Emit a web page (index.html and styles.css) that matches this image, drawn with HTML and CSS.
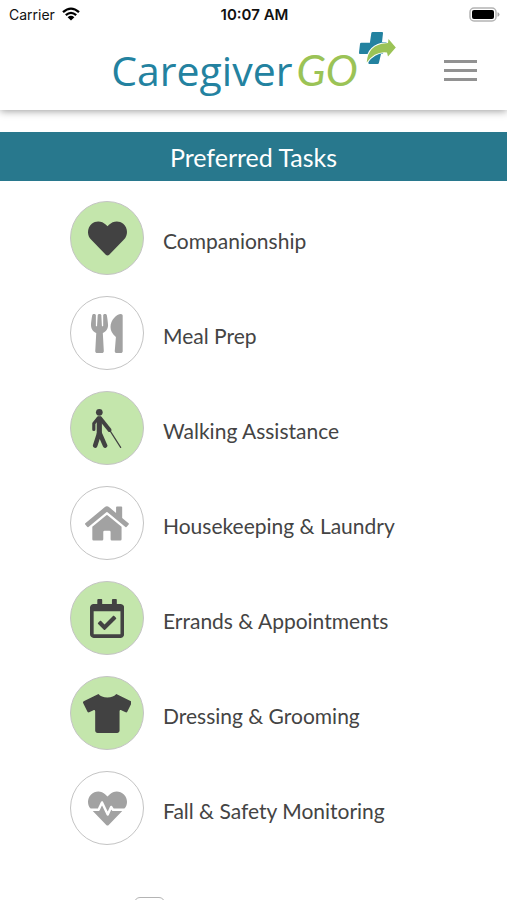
FILE: index.html
```html
<!DOCTYPE html>
<html lang="en">
<head>
  <meta charset="UTF-8">
  <meta name="viewport" content="width=device-width, initial-scale=1">
  <title>CaregiverGO - Preferred Tasks</title>
  <link rel="stylesheet" href="styles.css">
</head>
<body>
  <header class="header">
    <div class="status">
      <div class="carrier">
        <span>Carrier</span>
        <svg class="wifi" viewBox="0 0 18 14" aria-hidden="true">
          <path d="M1 5.2Q9-2 17 5.2M3.8 8.2Q9 3.6 14.2 8.2" fill="none" stroke="#000" stroke-width="2.3"/>
          <path d="M9 13.6L5.6 10.2Q9 7.4 12.4 10.2z"/>
        </svg>
      </div>
      <div class="time">10:07 AM</div>
      <svg class="battery" viewBox="0 0 31 15" aria-hidden="true">
        <rect x="1" y="1" width="26" height="13" rx="4" fill="#fff" stroke="#b4b4b4" stroke-width="1.5"/>
        <rect x="3" y="3" width="22" height="9" rx="2"/>
        <path d="M28.5 5.2q2 .6 2 2.3t-2 2.3z" fill="#a8a8a8"/>
      </svg>
    </div>

    <div class="brand-row">
      <a class="logo" href="index.html">
        <span class="logo-name">Caregiver</span>
        <span class="logo-go">GO</span>
        <svg class="logo-mark" viewBox="0 0 38 33" aria-hidden="true">
          <path fill="#2382a0" d="M14.8 0H24q1.2 0 1 1.2L24 10h8v12h-9l-2 8.500q-.2 1.500-1.500 1.500h-8q-1.400 0-1.100-1.500L11 22H2Q.8 22 1 20.500L2 12q.1-1.300 1.400-1.300h8.500L13.300 1.300Q13.400 0 14.800 0z"/>
          <path fill="#fff" d="M21.500 32l4-12h9v12z"/>
          <path fill="#9bc356" stroke="#fff" stroke-width="2" paint-order="stroke" d="M8.700 30.500Q10 12.500 28 11.200l2-.2.500-4 7.300 8.500-7.800 9-1-4Q17 19 8.700 30.500z"/>
        </svg>
      </a>
      <button class="menu" type="button" aria-label="Menu">
        <span class="bar"></span>
        <span class="bar"></span>
        <span class="bar"></span>
      </button>
    </div>
  </header>

  <main class="content">
    <h1 class="title">Preferred Tasks</h1>

    <form class="tasks">
      <label class="task">
        <span class="toggle">
          <input type="checkbox" name="companionship" checked>
          <svg viewBox="0 0 512 512" aria-hidden="true"><path d="M462.300 62.600C407.500 15.900 326 24.300 275.700 76.200L256 96.500l-19.700-20.300C186.100 24.300 104.500 15.900 49.700 62.600c-62.800 53.600-66.100 149.800-9.900 207.900l193.500 199.800c12.500 12.900 32.800 12.900 45.300 0l193.500-199.800c56.300-58.100 53-154.300-9.800-207.900z"/></svg>
        </span>
        <span class="name">Companionship</span>
      </label>

      <label class="task">
        <span class="toggle">
          <input type="checkbox" name="meals">
          <svg viewBox="0 0 416 512" aria-hidden="true"><path d="M207.900 15.200c.8 4.700 16.100 94.500 16.100 128.800 0 52.300-27.800 89.600-68.900 104.600L168 486.700c.7 13.700-10.200 25.300-24 25.300H80c-13.700 0-24.700-11.500-24-25.300l12.900-238.100C27.700 233.600 0 196.200 0 144 0 109.600 15.300 19.900 16.100 15.200 19.300-5.100 61.400-5.400 64 16.300v141.200c1.300 3.400 15.100 3.200 16 0 1.400-25.300 7.900-139.200 8-141.800 3.300-20.800 44.700-20.800 47.900 0 .2 2.700 6.600 116.500 8 141.800.9 3.200 14.800 3.400 16 0V16.300c2.600-21.600 44.800-21.400 47.900-1.100zm119.200 285.700l-15 185.100c-1.200 14 9.900 26 23.900 26h56c13.300 0 24-10.700 24-24V24c0-13.200-10.700-24-24-24-82.500 0-221.400 178.500-64.900 300.900z"/></svg>
        </span>
        <span class="name">Meal Prep</span>
      </label>

      <label class="task">
        <span class="toggle">
          <input type="checkbox" name="walking" checked>
          <svg viewBox="0 0 384 512" aria-hidden="true">
            <circle cx="96" cy="44" r="44"/>
            <g fill="none" stroke="currentColor" stroke-linecap="round" stroke-linejoin="round">
              <path stroke-width="42" d="M82 118L24 190v78"/>
              <path stroke-width="52" d="M110 124l120 152"/>
              <path stroke-width="68" d="M96 130v190"/>
              <path stroke-width="60" d="M90 330L42 480M106 330l66 150"/>
              <path stroke-width="16" d="M240 290l136 214"/>
            </g>
          </svg>
        </span>
        <span class="name">Walking Assistance</span>
      </label>

      <label class="task">
        <span class="toggle">
          <input type="checkbox" name="housekeeping">
          <svg viewBox="0 0 576 512" aria-hidden="true"><path d="M280.370 148.260L96 300.110V464a16 16 0 0 0 16 16l112.060-.29a16 16 0 0 0 15.920-16V368a16 16 0 0 1 16-16h64a16 16 0 0 1 16 16v95.640a16 16 0 0 0 16 16.050L464 480a16 16 0 0 0 16-16V300L295.670 148.260a12.190 12.190 0 0 0-15.300 0zM571.600 251.470L488 182.560V44.050a12 12 0 0 0-12-12h-56a12 12 0 0 0-12 12v72.610L318.470 43a48 48 0 0 0-61 0L4.340 251.470a12 12 0 0 0-1.600 16.900l25.500 31A12 12 0 0 0 45.150 301l235.220-193.740a12.190 12.190 0 0 1 15.300 0L530.900 301a12 12 0 0 0 16.900-1.600l25.500-31a12 12 0 0 0-1.700-16.930z"/></svg>
        </span>
        <span class="name">Housekeeping &amp; Laundry</span>
      </label>

      <label class="task">
        <span class="toggle">
          <input type="checkbox" name="errands" checked>
          <svg viewBox="0 0 448 512" aria-hidden="true"><path d="M400 64h-48V12c0-6.627-5.373-12-12-12h-40c-6.627 0-12 5.373-12 12v52H160V12c0-6.627-5.373-12-12-12h-40c-6.627 0-12 5.373-12 12v52H48C21.490 64 0 85.490 0 112v352c0 26.510 21.490 48 48 48h352c26.510 0 48-21.490 48-48V112c0-26.510-21.490-48-48-48zm-6 400H54a6 6 0 0 1-6-6V160h352v298a6 6 0 0 1-6 6zm-52.849-200.650L198.842 404.519c-4.705 4.667-12.303 4.637-16.971-.068l-75.091-75.699c-4.667-4.705-4.637-12.303.068-16.971l22.719-22.536c4.705-4.667 12.303-4.637 16.970.069l44.104 44.461 111.072-110.181c4.705-4.667 12.303-4.637 16.971.068l22.536 22.718c4.667 4.705 4.636 12.303-.069 16.970z"/></svg>
        </span>
        <span class="name">Errands &amp; Appointments</span>
      </label>

      <label class="task">
        <span class="toggle">
          <input type="checkbox" name="dressing" checked>
          <svg viewBox="0 0 640 512" aria-hidden="true"><path d="M631.200 96.500L436.500 0C416.400 27.800 371.900 47.200 320 47.200S223.600 27.800 203.500 0L8.800 96.500c-7.900 4-11.100 13.600-7.200 21.500l57.200 114.500c4 7.900 13.600 11.100 21.500 7.200l56.600-27.700c10.600-5.200 23 2.500 23 14.400V480c0 17.700 14.300 32 32 32h256c17.700 0 32-14.300 32-32V226.300c0-11.800 12.400-19.600 23-14.400l56.600 27.700c7.900 4 17.500.8 21.500-7.200L638.300 118c4-7.900.8-17.600-7.100-21.500z"/></svg>
        </span>
        <span class="name">Dressing &amp; Grooming</span>
      </label>

      <label class="task">
        <span class="toggle">
          <input type="checkbox" name="safety">
          <svg viewBox="0 0 512 512" aria-hidden="true">
            <path d="M473.700 73.900l-2.400-2.500c-51.500-52.600-135.800-52.600-187.400 0L256 100l-27.900-28.500c-51.500-52.700-135.900-52.700-187.400 0l-2.400 2.400C-10.400 123.700-12.500 203 31 256l212.100 218.500c7.100 7.300 18.600 7.300 25.700 0L481 256c43.500-53 41.400-132.300-7.300-182.100z"/>
            <path d="M20 272h119l45-96 75 160 45-100 24 36h164" fill="none" stroke="#fff" stroke-width="32" stroke-linejoin="round"/>
          </svg>
        </span>
        <span class="name">Fall &amp; Safety Monitoring</span>
      </label>

      <input class="agree" type="checkbox" name="all" aria-label="Select all tasks">
    </form>
  </main>
</body>
</html>
```
FILE: styles.css
```css
* {
  box-sizing: border-box;
}
body {
  display: flex;
  flex-direction: column;
  height: 100vh;
  margin: 0;
  overflow: hidden;
  background: #fff;
  color: #444;
  font-family: Lato, sans-serif;
}

/* top bar */
.header {
  flex: none;
  z-index: 1;
  padding-bottom: 16px;
  background: #fff;
  box-shadow: 0 1px 8px rgba(0, 0, 0, 0.4);
}
.status {
  display: grid;
  grid-template-columns: 1fr auto 1fr;
  align-items: center;
  height: 28px;
  padding: 0 7px 0 9px;
  color: #111;
  font-family: Inter, sans-serif;
  font-size: 14px;
}
.carrier {
  display: flex;
  align-items: center;
  gap: 7px;
}
.wifi {
  width: 18px;
  height: 14px;
}
.time {
  font-size: 15px;
  font-weight: 600;
}
.battery {
  justify-self: end;
  width: 31px;
  height: 15px;
}
.brand-row {
  display: grid;
  grid-template-columns: 1fr auto 1fr;
  align-items: center;
  height: 66px;
  padding: 0 30px;
}
.logo {
  display: flex;
  grid-column: 2;
  align-items: baseline;
  font-family: "Open Sans", sans-serif;
  font-size: 41px;
  line-height: 84px;
  text-decoration: none;
}
.logo-name {
  color: #2382a0;
  font-weight: 500;
}
.logo-go {
  margin-left: 4px;
  color: #9bc356;
  font-family: Lato, sans-serif;
  font-size: 43px;
  font-style: italic;
}
.logo-mark {
  align-self: flex-start;
  width: 38px;
  height: 33px;
  margin-top: 4px;
}
.menu {
  display: flex;
  grid-column: 3;
  flex-direction: column;
  justify-self: end;
  gap: 6px;
  padding: 8px 0;
  border: none;
  background: none;
  cursor: pointer;
}
.bar {
  width: 33px;
  height: 3px;
  background: #929292;
}

/* task list */
.content {
  flex: 1;
  min-height: 0;
  padding-top: 22px;
  overflow-y: auto;
  scrollbar-width: none;
}
.title {
  margin: 0;
  padding-top: 2px;
  background: #28788d;
  color: #fff;
  font-size: 25px;
  font-weight: 400;
  line-height: 47px;
  text-align: center;
}
.tasks {
  display: flex;
  flex-direction: column;
  gap: 21px;
  padding: 20px 70px;
}
.task {
  display: flex;
  align-items: center;
  gap: 19px;
  cursor: pointer;
}
.toggle {
  display: grid;
  place-items: center;
  color: #a2a2a2;
}
.toggle input,
.toggle svg {
  grid-area: 1 / 1;
}
.toggle input {
  width: 74px;
  height: 74px;
  margin: 0;
  border: 1px solid #c4c4c4;
  border-radius: 50%;
  appearance: none;
  cursor: pointer;
}
.toggle input:checked {
  background: #c4e6ac;
}
.toggle input:checked + svg {
  color: #424242;
}
.toggle svg {
  height: 39px;
  fill: currentColor;
  pointer-events: none;
}
.name {
  padding-top: 4px;
  font-size: 21px;
}
.agree {
  width: 31px;
  height: 31px;
  margin: 31px 0 0 64px;
  border: 1px solid #b4b4b4;
  border-radius: 6px;
  appearance: none;
}
```
